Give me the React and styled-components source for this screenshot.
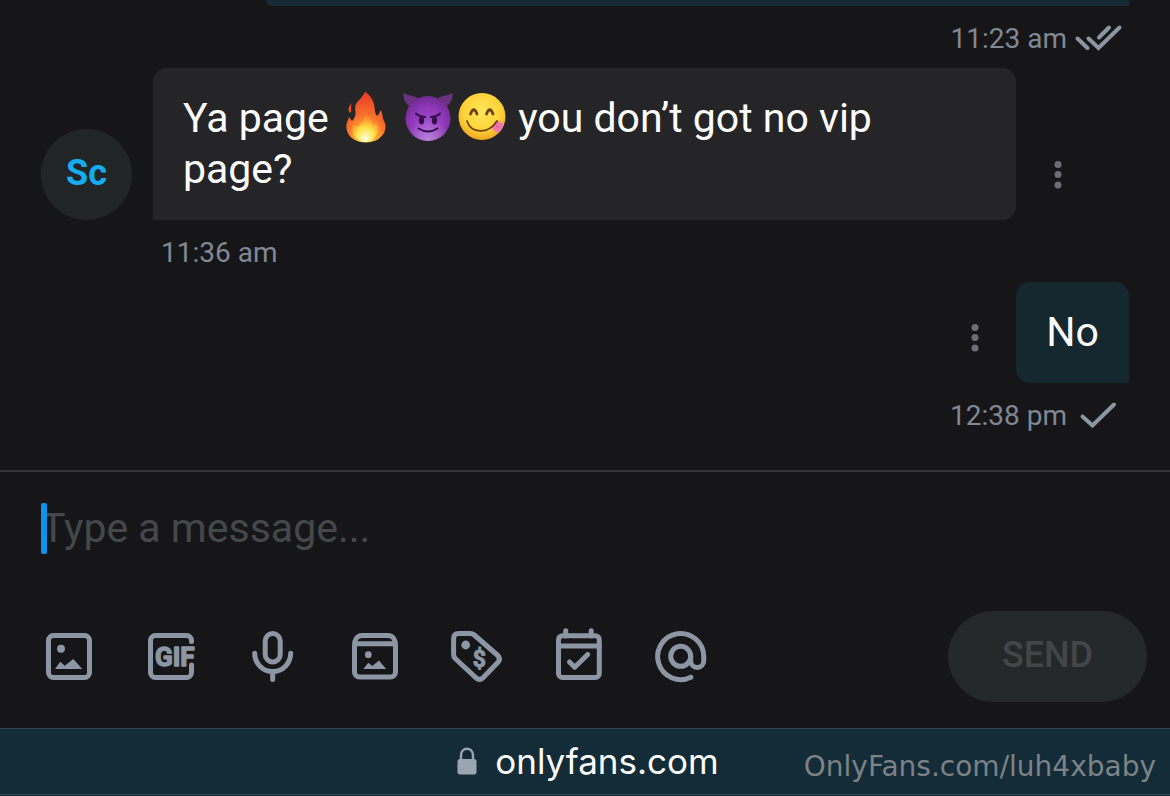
import React, { useState } from "react";
import styled, { createGlobalStyle } from "styled-components";

const GlobalStyle = createGlobalStyle`
  * {
    box-sizing: border-box;
  }

  body {
    margin: 0;
    background: #161618;
    font-family: Roboto, "Liberation Sans", sans-serif;
  }

  button {
    padding: 0;
    border: 0;
    background: none;
    font-family: inherit;
  }
`;

const Page = styled.div`
  display: flex;
  flex-direction: column;
  min-height: 100vh;
`;

const Messages = styled.main`
  display: flex;
  flex-direction: column;
  padding: 0 41px 25px;
`;

const MessageRow = styled.div`
  display: flex;
  align-items: flex-end;
  justify-content: ${({ $own }) => ($own ? "flex-end" : "flex-start")};
  padding-right: ${({ $own }) => ($own ? "0" : "30px")};
`;

const Bubble = styled.div`
  flex: ${({ $own }) => ($own ? "none" : "1")};
  padding: 25px 30px;
  border-radius: ${({ $own }) => ($own ? "14px 14px 0 14px" : "14px 14px 14px 0")};
  background: ${({ $own }) => ($own ? "#152830" : "#252527")};
  color: #fdfdfd;
  font-size: 41px;
  line-height: 51px;
`;

const BubbleEnd = styled.div`
  height: 6px;
  margin-left: 225px;
  border-radius: 0 0 0 14px;
  background: #152a34;
`;

const Avatar = styled.div`
  display: flex;
  align-items: center;
  justify-content: center;
  width: 91px;
  height: 91px;
  margin-right: 21px;
  padding-bottom: 4px;
  border-radius: 50%;
  background: #222526;
  color: #14aef0;
  font-size: 36px;
  font-weight: 700;
`;

const MenuButton = styled.button`
  display: flex;
  align-items: center;
  justify-content: center;
  width: 83px;
  height: 91px;
`;

const Meta = styled.div`
  display: flex;
  align-items: center;
  justify-content: ${({ $own }) => ($own ? "flex-end" : "flex-start")};
  gap: 7px;
  height: 62px;
  padding: ${({ $own }) => ($own ? "2px 6px 0 0" : "2px 0 0 120px")};
  color: #808894;
  font-size: 28px;
`;

const Composer = styled.form`
  padding-top: 31px;
  border-top: 2px solid #353638;
`;

const InputWrap = styled.div`
  position: relative;
  display: flex;
  padding: 0 41px;
`;

const MessageInput = styled.input`
  flex: 1;
  min-width: 0;
  height: 50px;
  padding: 0;
  border: 0;
  outline: 0;
  background: none;
  color: #fdfdfd;
  caret-color: #0d94ea;
  font-family: inherit;
  font-size: 41px;

  &::placeholder {
    color: #45484b;
    opacity: 1;
  }
`;

const Caret = styled.span`
  position: absolute;
  top: 0;
  left: 41px;
  width: 6px;
  height: 51px;
  border-radius: 2px;
  background: #0d94ea;
`;

const Toolbar = styled.div`
  display: flex;
  align-items: center;
  justify-content: space-between;
  padding: 58px 23px 26px 41px;
`;

const Tools = styled.div`
  display: flex;
  gap: 46px;
`;

const ToolButton = styled.button`
  display: flex;
  color: #8c96a4;
`;

const SendButton = styled.button`
  width: 199px;
  height: 91px;
  padding-bottom: 4px;
  border-radius: 46px;
  background: #252829;
  color: #434547;
  font-size: 36px;
  font-weight: 500;
`;

const Footer = styled.footer`
  flex: 1;
  background: #142c37;
`;

const AddressBar = styled.div`
  display: grid;
  grid-template-columns: 1fr auto 1fr;
  align-items: center;
  height: 67px;
  border-top: 1px solid #35464e;
  border-bottom: 1px solid #35464e;
`;

const SiteLink = styled.a`
  grid-column: 2;
  display: flex;
  align-items: center;
  gap: 18px;
  padding: 0 0 2px 6px;
  color: #fdfdfd;
  font-family: Inter, "Liberation Sans", sans-serif;
  font-size: 35px;
  text-decoration: none;
`;

const ProfileLink = styled.a`
  justify-self: end;
  padding: 9px 14px 0 0;
  color: #7c8286;
  font-family: "DejaVu Sans", sans-serif;
  font-size: 28px;
  text-decoration: none;
`;

const EmojiSvg = styled.svg`
  width: 53px;
  height: 51px;
  overflow: visible;
  vertical-align: top;
`;

const Icon = ({ children }) => (
  <svg
    width="56"
    height="57"
    viewBox="0 0 56 57"
    fill="none"
    stroke="currentColor"
    strokeWidth="5"
    strokeLinecap="round"
    strokeLinejoin="round"
    aria-hidden="true"
  >
    {children}
  </svg>
);

const ImageIcon = () => (
  <Icon>
    <rect x="7.5" y="7.5" width="41" height="42" rx="5" />
    <g fill="currentColor" stroke="none">
      <circle cx="20" cy="20.7" r="4" />
      <path d="M14 41 19.3 33.7 23.7 37.7 32.3 31 41.3 41Z" />
    </g>
  </Icon>
);

const GifIcon = () => (
  <Icon>
    <path d="M48.5 13.5V12.5a5 5 0 0 0-5-5H12.5a5 5 0 0 0-5 5V44.5a5 5 0 0 0 5 5H43.5a5 5 0 0 0 5-5V37" />
    <text
      x="12"
      y="38"
      fill="currentColor"
      stroke="currentColor"
      strokeWidth="1.4"
      fontFamily="Roboto, sans-serif"
      fontSize="26"
      fontWeight="700"
    >
      GIF
    </text>
  </Icon>
);

const MicIcon = () => (
  <Icon>
    <rect x="20.2" y="5.5" width="15" height="28.5" rx="7.5" />
    <path d="M9.7 25.2a18 18.3 0 0 0 36 0M27.7 43.5V51.5" />
  </Icon>
);

const VaultIcon = () => (
  <Icon>
    <path d="M7.5 17C7.5 12 10 7.5 15 7.5H41C46 7.5 48.5 12 48.5 17V44a5 5 0 0 1-5 5H12.5a5 5 0 0 1-5-5ZM8 15.7H48" />
    <g fill="currentColor" stroke="none">
      <circle cx="21.3" cy="26.7" r="3.4" />
      <path d="M16.3 41 21.3 34.7 25.3 38 32 32.5 39.2 41Z" />
    </g>
  </Icon>
);

const PriceIcon = () => (
  <Icon>
    <path d="M9.5 5.5H21Q23.5 5.5 25.3 7L48.8 27.5Q52 31 49 34.3L34 49.8Q30.5 53 27 49.8L6.2 30.5Q4.6 28.8 4.6 26.5V10.4Q4.6 5.5 9.5 5.5Z" />
    <circle cx="16.7" cy="17" r="4.4" fill="currentColor" stroke="none" />
    <text
      x="30.3"
      y="38.5"
      textAnchor="middle"
      fill="currentColor"
      stroke="currentColor"
      strokeWidth="1"
      fontFamily="Roboto, sans-serif"
      fontSize="23"
      fontWeight="700"
    >
      $
    </text>
  </Icon>
);

const ScheduleIcon = () => (
  <Icon>
    <rect x="7.5" y="7.7" width="40.8" height="41.8" rx="4" />
    <path d="M8 18H48M14.7 2.8V8M40.2 2.8V8M18.5 34 23.7 39.2 36.7 26.5" />
  </Icon>
);

const MentionIcon = () => (
  <Icon>
    <circle cx="27.7" cy="28.3" r="10" />
    <path d="M37.8 49.2A23 23 0 1 1 50.7 28.3V33a6.5 6.5 0 0 1-13 0V28.3" />
  </Icon>
);

const Dots = () => (
  <svg width="8" height="28" viewBox="0 0 8 28" fill="#6c6e73" aria-hidden="true">
    <circle cx="4" cy="3.6" r="3.5" />
    <circle cx="4" cy="13.6" r="3.5" />
    <circle cx="4" cy="24" r="3.5" />
  </svg>
);

const Check = ({ double }) => (
  <svg
    width="49"
    height="32"
    viewBox="0 0 49 32"
    fill="none"
    stroke="#8c96a2"
    strokeWidth="4"
    strokeLinecap="round"
    aria-hidden="true"
  >
    {double ? (
      <path d="M3.5 16.5 13.5 26M14.5 16.500 24.500 26 45.500 5.500M25 15.500 35 5.500" />
    ) : (
      <path d="M8.500 17.500 18.500 26.500 40 5.500" />
    )}
  </svg>
);

const Lock = () => (
  <svg width="20" height="28" viewBox="0 0 20 28" aria-hidden="true">
    <path d="M4 13V8a6 6.3 0 0 1 12 0v5" fill="none" stroke="#9ba5af" strokeWidth="2.4" />
    <rect x="0.5" y="12" width="19" height="15.5" rx="2.5" fill="#9ba5af" />
  </svg>
);

const Fire = () => (
  <EmojiSvg viewBox="0 0 53 51" role="img" aria-label="fire">
    <defs>
      <radialGradient id="fire" cx="0.5" cy="0.95" r="0.9">
        <stop offset="0" stopColor="#ffe34c" />
        <stop offset="0.25" stopColor="#ffb533" />
        <stop offset="0.55" stopColor="#f9702c" />
        <stop offset="1" stopColor="#e93d25" />
      </radialGradient>
      <radialGradient id="fireCore" cx="0.5" cy="0.9" r="0.8">
        <stop offset="0" stopColor="#fffde0" />
        <stop offset="0.45" stopColor="#ffe348" />
        <stop offset="1" stopColor="#ff9a2e" stopOpacity="0.1" />
      </radialGradient>
    </defs>
    <path
      fill="url(#fire)"
      d="M26-1.5C31 2 35 8 35.5 14 36 18 36 21 38 23 40 21 41 19 41.5 17 44 20 43 24 45 28 47 31 47 35 45.5 39 42 46 35 49.5 27 49.5 18 49.5 10 45 8 38 6 31 9 28 10 24L13 28C15 26 17 23 16.5 19 15 10 19 9 22 5 24 2 25.5 1 26-1.5Z"
    />
    <path fill="#f04d27" d="M13 10C9 14 8.5 17 11 20 14 17 10.5 15 13 10Z" />
    <path
      fill="url(#fireCore)"
      d="M27 18C28 23 33 27 34 33 36 32 37 30 37.5 28 41 34 39 41 36 44 33 48 29 49 26 49 21 49 16 46 14 41 13 37 14 34 14 31L18 34C22 31 27 26 27 18Z"
    />
  </EmojiSvg>
);

const Devil = () => (
  <EmojiSvg viewBox="0 0 53 51" role="img" aria-label="smiling face with horns">
    <defs>
      <radialGradient id="devil" cx="0.5" cy="0.62" r="0.6">
        <stop offset="0" stopColor="#a24bd0" />
        <stop offset="0.6" stopColor="#9038b8" />
        <stop offset="1" stopColor="#722a94" />
      </radialGradient>
      <radialGradient id="devilGlow" cx="0.5" cy="1" r="0.5">
        <stop offset="0" stopColor="#c79be6" stopOpacity="0.8" />
        <stop offset="1" stopColor="#c79be6" stopOpacity="0" />
      </radialGradient>
    </defs>
    <path
      fill="#6b3280"
      d="M1.5-.5C5 3 10 2 16 5L7.500 13.500C3 10 1 5 1.500-.500ZM50.500-.500C47 3 42 2 36 5L44.500 13.500C49 10 51 5 50.500-.500Z"
    />
    <circle cx="26" cy="25.5" r="22.5" fill="url(#devil)" />
    <circle cx="26" cy="25.5" r="22.5" fill="url(#devilGlow)" />
    <g fill="#32104a">
      <ellipse cx="19.5" cy="27.5" rx="2.6" ry="4" />
      <ellipse cx="32.5" cy="27.5" rx="2.6" ry="4" />
    </g>
    <path
      fill="none"
      stroke="#32104a"
      strokeWidth="2"
      strokeLinecap="round"
      d="M14 20.5Q17 23.5 23 24M38 20.5Q35 23.5 29 24M16.5 35.5Q26 41.5 35.5 35.5"
    />
  </EmojiSvg>
);

const Yum = () => (
  <EmojiSvg viewBox="0 0 53 51" role="img" aria-label="face savoring food">
    <defs>
      <radialGradient id="yum" cx="0.5" cy="0.4" r="0.62">
        <stop offset="0" stopColor="#ffe75b" />
        <stop offset="0.65" stopColor="#ffd338" />
        <stop offset="1" stopColor="#eda01c" />
      </radialGradient>
    </defs>
    <circle cx="27" cy="23.5" r="23.5" fill="url(#yum)" />
    <path fill="#f177ae" d="M36.5 34 41 27.5Q46 28 48.5 32 47 37.500 43 39.500 38.500 38.500 36.500 34Z" />
    <path fill="none" stroke="#d35390" strokeWidth="1" d="M40.5 32.5 44 35" />
    <g fill="none" stroke="#6b4211" strokeLinecap="round">
      <path strokeWidth="2.8" d="M15.5 21Q18.8 12.500 22 21M31.5 21Q34.8 12.500 38 21" />
      <path strokeWidth="1.8" d="M12 28C16 40.500 33 42 42 28" />
    </g>
  </EmojiSvg>
);

const tools = [
  { label: "Add photo", icon: ImageIcon },
  { label: "Add GIF", icon: GifIcon },
  { label: "Record voice", icon: MicIcon },
  { label: "Open vault", icon: VaultIcon },
  { label: "Set price", icon: PriceIcon },
  { label: "Schedule", icon: ScheduleIcon },
  { label: "Mention", icon: MentionIcon },
];

function App() {
  const [message, setMessage] = useState("");

  return (
    <Page>
      <GlobalStyle />
      <Messages>
        <BubbleEnd />
        <Meta $own>
          <time>11:23 am</time>
          <Check double />
        </Meta>

        <MessageRow>
          <Avatar>Sc</Avatar>
          <Bubble>
            Ya page <Fire /> <Devil />
            <Yum /> you don’t got no vip <br />
            page?
          </Bubble>
          <MenuButton type="button" aria-label="Message options">
            <Dots />
          </MenuButton>
        </MessageRow>
        <Meta>
          <time>11:36 am</time>
        </Meta>

        <MessageRow $own>
          <MenuButton type="button" aria-label="Message options">
            <Dots />
          </MenuButton>
          <Bubble $own>No</Bubble>
        </MessageRow>
        <Meta $own>
          <time>12:38 pm</time>
          <Check />
        </Meta>
      </Messages>

      <Composer onSubmit={(e) => e.preventDefault()}>
        <InputWrap>
          <MessageInput
            aria-label="Message"
            placeholder="Type a message..."
            value={message}
            onChange={(e) => setMessage(e.target.value)}
          />
          {!message && <Caret />}
        </InputWrap>
        <Toolbar>
          <Tools>
            {tools.map(({ label, icon: ToolIcon }) => (
              <ToolButton key={label} type="button" aria-label={label}>
                <ToolIcon />
              </ToolButton>
            ))}
          </Tools>
          <SendButton type="submit" disabled={!message}>
            SEND
          </SendButton>
        </Toolbar>
      </Composer>

      <Footer>
        <AddressBar>
          <SiteLink href="#site">
            <Lock />
            onlyfans.com
          </SiteLink>
          <ProfileLink href="#profile">OnlyFans.com/luh4xbaby</ProfileLink>
        </AddressBar>
      </Footer>
    </Page>
  );
}

export default App;
